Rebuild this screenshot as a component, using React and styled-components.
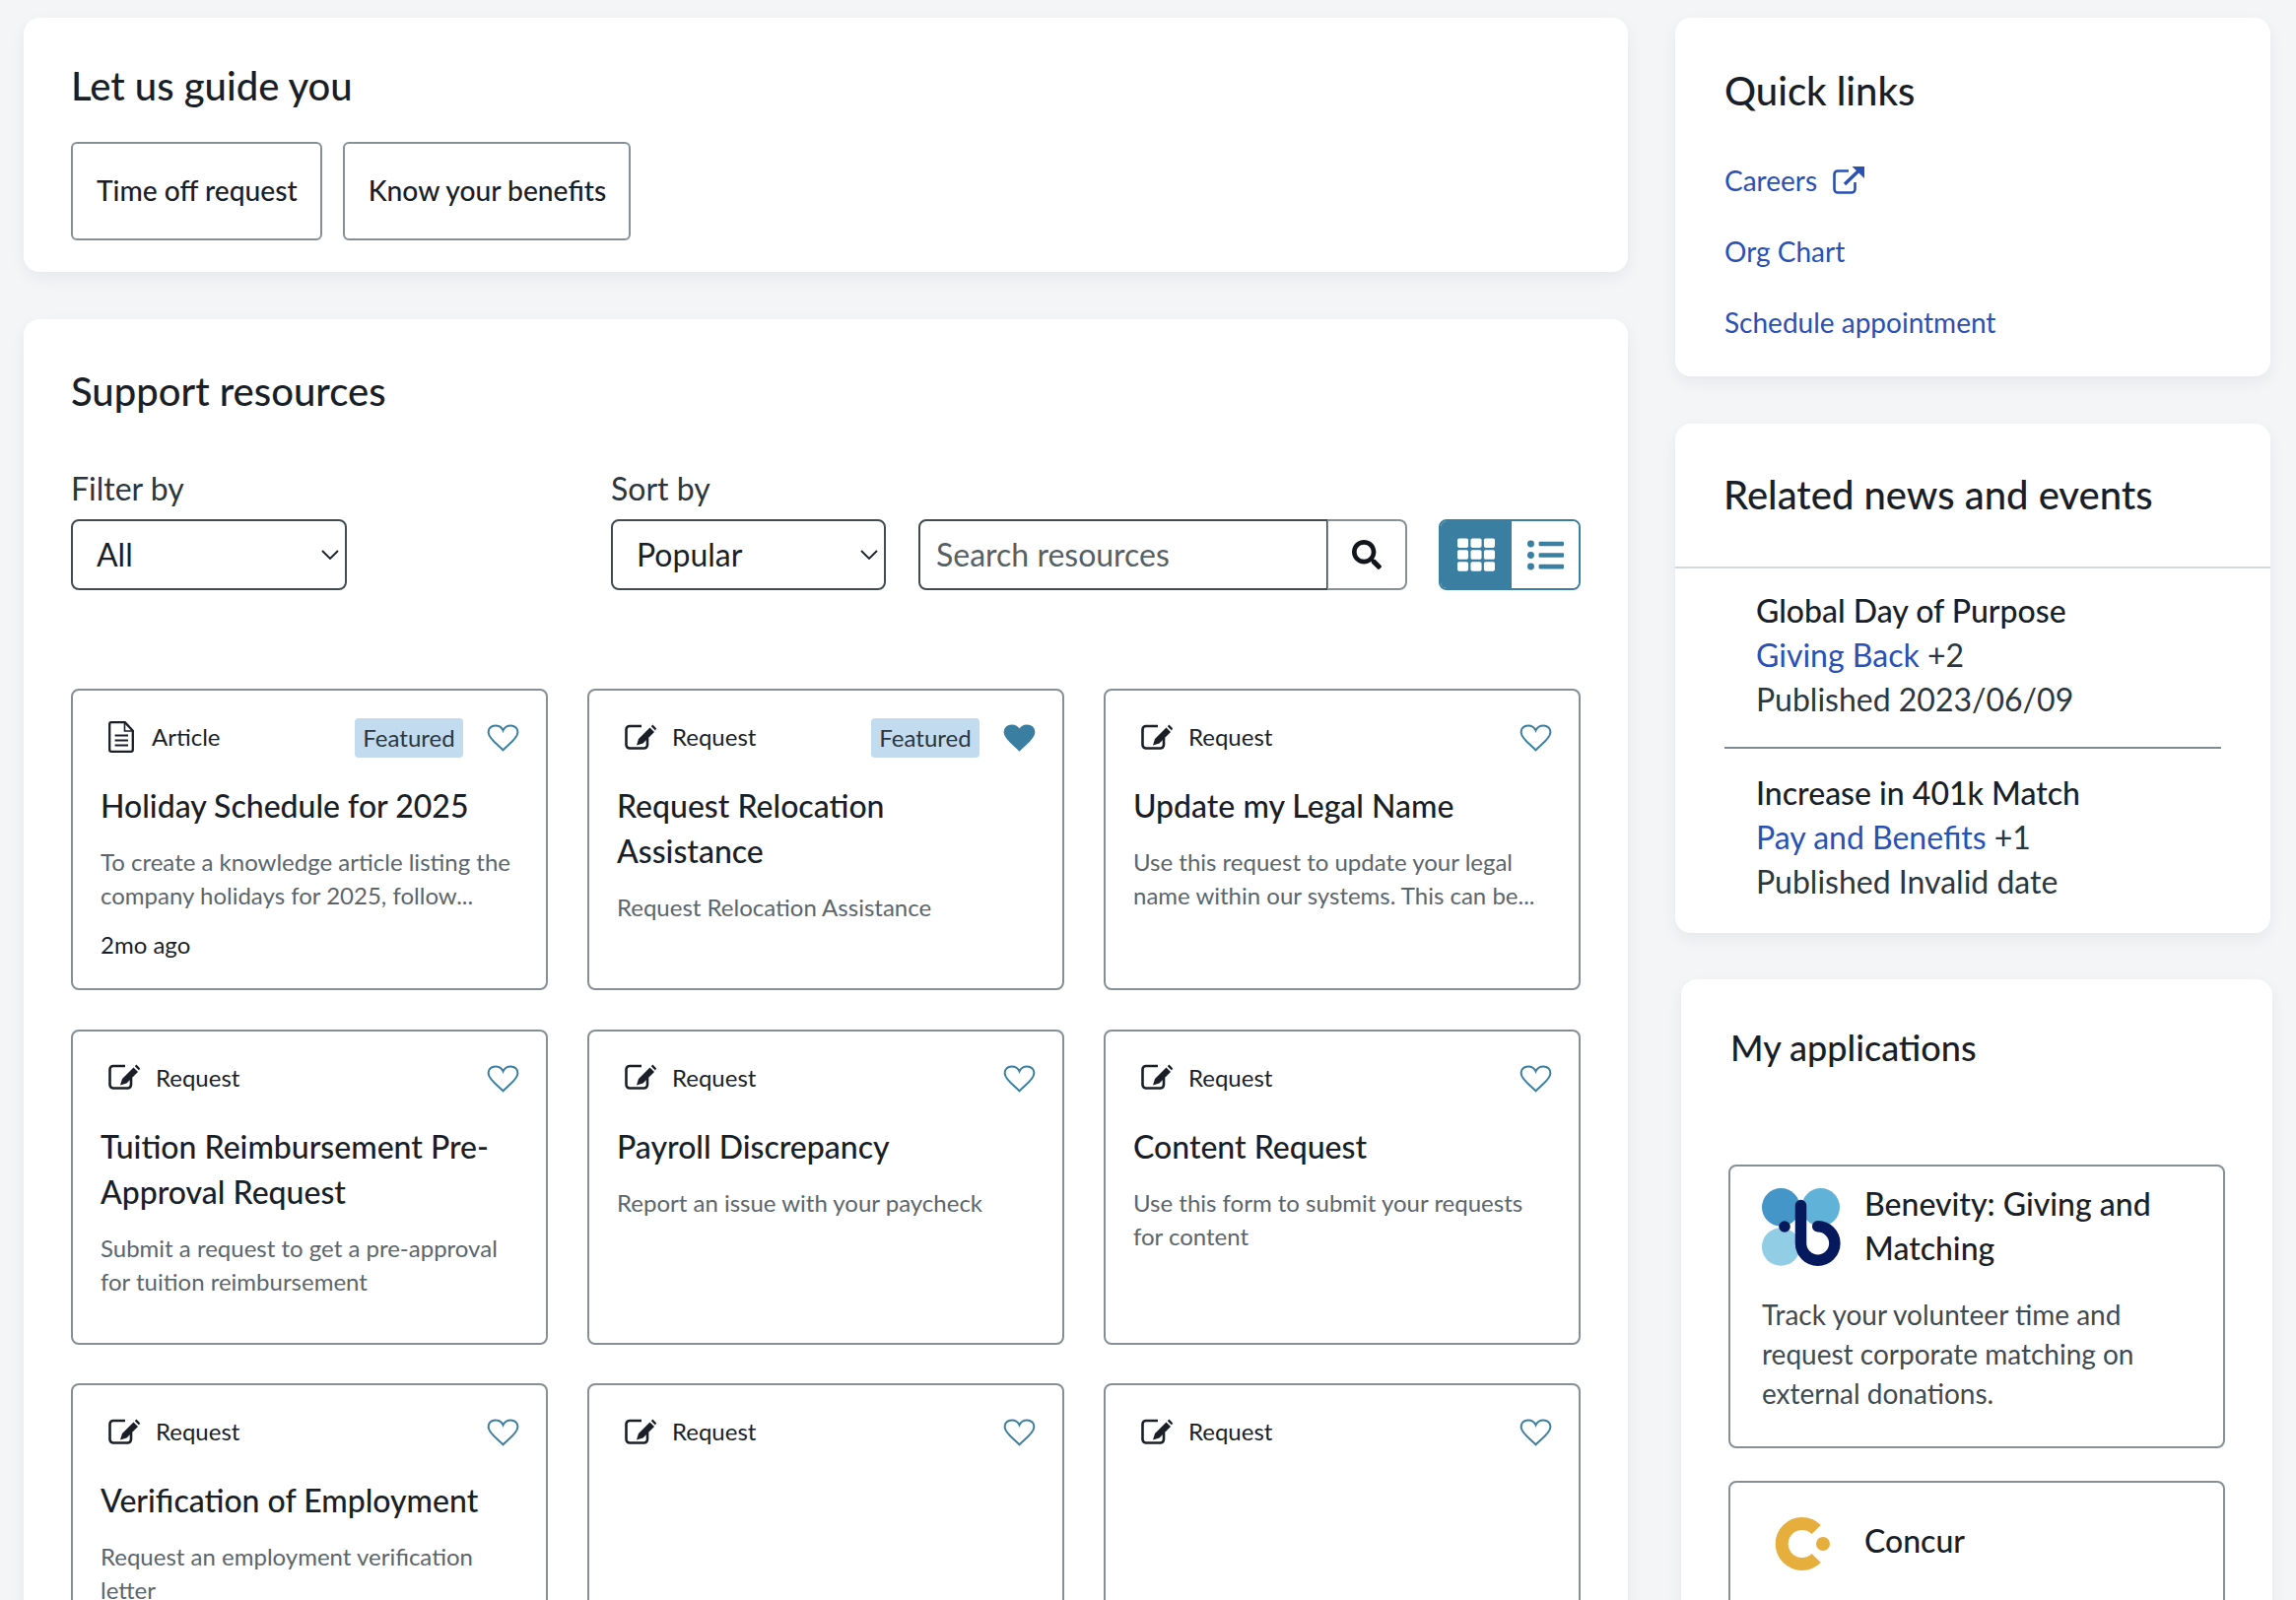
import React from "react";
import styled, { createGlobalStyle } from "styled-components";
import { FaSearch, FaTh, FaListUl } from "react-icons/fa";

const GlobalStyle = createGlobalStyle`
  html, body {
    margin: 0;
    height: 100%;
    overflow: hidden;
    background: #f4f5f7;
    font-family: Lato, "Liberation Sans", sans-serif;
    color: #1a1f27;
  }
  * { box-sizing: border-box; }
`;

const resources = [
  { type: "Article", title: "Holiday Schedule for 2025", desc: "To create a knowledge article listing the company holidays for 2025, follow...", meta: "2mo ago", featured: true },
  { type: "Request", title: "Request Relocation Assistance", desc: "Request Relocation Assistance", featured: true, liked: true },
  { type: "Request", title: "Update my Legal Name", desc: "Use this request to update your legal name within our systems. This can be..." },
  { type: "Request", title: "Tuition Reimbursement Pre-Approval Request", desc: "Submit a request to get a pre-approval for tuition reimbursement" },
  { type: "Request", title: "Payroll Discrepancy", desc: "Report an issue with your paycheck" },
  { type: "Request", title: "Content Request", desc: "Use this form to submit your requests for content" },
  { type: "Request", title: "Verification of Employment", desc: "Request an employment verification letter" },
  { type: "Request" },
  { type: "Request" },
];

const news = [
  { title: "Global Day of Purpose", tag: "Giving Back", more: "+2", date: "Published 2023/06/09" },
  { title: "Increase in 401k Match", tag: "Pay and Benefits", more: "+1", date: "Published Invalid date" },
];

function Heart({ filled }) {
  return (
    <HeartSvg viewBox="0 0 33 28" $filled={filled}>
      <path d="M16.5 26.3 C12.5 21.8 1.6 14.8 1.6 8.2 C1.6 4.2 4.8 1.4 8.6 1.4 C12 1.4 15.2 3.2 16.5 6.4 C17.8 3.2 21 1.4 24.4 1.4 C28.2 1.4 31.4 4.2 31.4 8.2 C31.4 14.8 20.5 21.8 16.5 26.3 Z" />
    </HeartSvg>
  );
}

function ExternalIcon() {
  return (
    <LinkIcon viewBox="0 0 32 28" fill="none" stroke="currentColor">
      <path d="M16 4.5 H5 a3.5 3.5 0 0 0 -3.5 3.5 V23 a3.5 3.5 0 0 0 3.5 3.5 H19 a3.5 3.5 0 0 0 3.5 -3.5 V16" strokeWidth="2.6" />
      <path d="M12 18 L26 4.5" strokeWidth="3.4" />
      <path d="M19.5 0 H32 V12 Z" fill="currentColor" stroke="none" />
    </LinkIcon>
  );
}

function DocIcon() {
  return (
    <TypeSvg viewBox="0 0 26 32" width="26" height="32" fill="none" stroke="currentColor" $gap={18}>
      <path d="M3 1.2 H16.8 L24.8 9.8 V29 a1.8 1.8 0 0 1 -1.8 1.8 H3 a1.8 1.8 0 0 1 -1.8 -1.8 V3 a1.8 1.8 0 0 1 1.8 -1.8 Z" strokeWidth="2.3" />
      <path d="M16.5 1.5 V10 H24.6" strokeWidth="1.6" />
      <path d="M6.6 14.4 H20 M6.6 19.4 H20 M6.6 24.4 H20" strokeWidth="2" />
    </TypeSvg>
  );
}

function EditIcon() {
  return (
    <TypeSvg viewBox="0 0 32 26" width="32" height="26" fill="none" stroke="currentColor" $gap={16}>
      <path d="M17 2 H5 a3.5 3.5 0 0 0 -3.5 3.5 V21 a3.5 3.5 0 0 0 3.5 3.5 H19.5 a3.5 3.5 0 0 0 3.5 -3.5 V14" strokeWidth="2.6" />
      <path d="M12 21.5 L14 15 L25.5 3.5 L30 8 L18.5 19.5 Z" fill="currentColor" stroke="none" />
      <path d="M26.8 2.2 L28.4 0.6 L32 4.2 L31 6.6 Z" fill="currentColor" stroke="none" />
    </TypeSvg>
  );
}

function Chevron() {
  return (
    <SelectArrow viewBox="0 0 18 10" fill="none" stroke="#1a1f27">
      <path d="M1 1 L9 9 L17 1" strokeWidth="1.8" />
    </SelectArrow>
  );
}

function BenevityLogo() {
  return (
    <Logo viewBox="0 0 80 80">
      <circle cx="19.3" cy="19.3" r="19.3" fill="#4496c8" />
      <circle cx="59.7" cy="19.3" r="19.3" fill="#61b2d8" />
      <circle cx="19.3" cy="59.5" r="19.3" fill="#92cde6" />
      <path d="M39.5 17.5 V56 A17.2 17.2 0 1 0 56.7 38.8" fill="none" stroke="#06195c" strokeWidth="11.5" strokeLinecap="round" />
      <circle cx="23" cy="39" r="5.8" fill="#06195c" />
    </Logo>
  );
}

function ConcurLogo() {
  return (
    <Logo viewBox="0 0 80 80">
      <path d="M55.2 25.5 A20.5 20.5 0 1 0 55.2 54.5" fill="none" stroke="#e6ae3c" strokeWidth="13" />
      <circle cx="62" cy="40" r="7" fill="#e6ae3c" />
    </Logo>
  );
}

function ResourceCard({ type, title, desc, meta, featured, liked }) {
  return (
    <Card>
      <CardHead>
        <CardType>
          {type === "Article" ? <DocIcon /> : <EditIcon />}
          {type}
        </CardType>
        {featured && <Tag>Featured</Tag>}
        <Heart filled={liked} />
      </CardHead>
      {title && <CardTitle>{title}</CardTitle>}
      {desc && <CardDesc>{desc}</CardDesc>}
      <CardMeta>{meta}</CardMeta>
    </Card>
  );
}

export default function App() {
  return (
    <>
      <GlobalStyle />
      <Page>
        <Main>
          <Panel $pad="44px 49px 32px 48px">
            <Heading>Let us guide you</Heading>
            <GuideRow>
              <GuideButton>Time off request</GuideButton>
              <GuideButton>Know your benefits</GuideButton>
            </GuideRow>
          </Panel>
          <Panel $pad="48px 48px 0 48px">
            <Heading>Support resources</Heading>
            <Filters>
              <FilterGroup>
                <Label htmlFor="filter">Filter by</Label>
                <SelectWrap>
                  <Select id="filter" defaultValue="All">
                    <option>All</option>
                  </Select>
                  <Chevron />
                </SelectWrap>
              </FilterGroup>
              <FilterGroup>
                <Label htmlFor="sort">Sort by</Label>
                <SelectWrap>
                  <Select id="sort" defaultValue="Popular">
                    <option>Popular</option>
                  </Select>
                  <Chevron />
                </SelectWrap>
              </FilterGroup>
              <SearchBox>
                <SearchInput placeholder="Search resources" />
                <SearchButton><FaSearch /></SearchButton>
              </SearchBox>
              <ViewToggle>
                <ToggleButton $active><FaTh /></ToggleButton>
                <ToggleButton><FaListUl /></ToggleButton>
              </ViewToggle>
            </Filters>
            <CardGrid>
              {resources.map((item, index) => (
                <ResourceCard key={index} {...item} />
              ))}
            </CardGrid>
          </Panel>
        </Main>
        <Side>
          <Panel $pad="49px 50px 38px">
            <SideHeading>Quick links</SideHeading>
            <QuickList>
              <QuickLink href="#">Careers <ExternalIcon /></QuickLink>
              <QuickLink href="#">Org Chart</QuickLink>
              <QuickLink href="#">Schedule appointment</QuickLink>
            </QuickList>
          </Panel>
          <Panel $pad="0 0 6px">
            <NewsHead>
              <SideHeading>Related news and events</SideHeading>
            </NewsHead>
            {news.map((item, index) => (
              <NewsItem key={item.title} $last={index === news.length - 1}>
                <NewsTitle>{item.title}</NewsTitle>
                <NewsLine><NewsTag href="#">{item.tag}</NewsTag> {item.more}</NewsLine>
                <NewsDate>{item.date}</NewsDate>
              </NewsItem>
            ))}
          </Panel>
          <AppsPanel>
            <AppsHeading>My applications</AppsHeading>
            <AppCard>
              <AppHead>
                <BenevityLogo />
                <AppTitle>Benevity: Giving and Matching</AppTitle>
              </AppHead>
              <AppDesc>Track your volunteer time and request corporate matching on external donations.</AppDesc>
            </AppCard>
            <AppCard>
              <AppHead>
                <ConcurLogo />
                <AppTitle $center>Concur</AppTitle>
              </AppHead>
            </AppCard>
          </AppsPanel>
        </Side>
      </Page>
    </>
  );
}

const Page = styled.div`
  display: grid;
  grid-template-columns: 1628px 604px;
  column-gap: 48px;
  align-items: start;
  height: 1624px;
  overflow: hidden;
  padding: 18px 0 0 24px;
`;

const Main = styled.main`
  display: flex;
  flex-direction: column;
  gap: 48px;
`;

const Side = styled.aside`
  display: flex;
  flex-direction: column;
  gap: 48px;
`;

const Panel = styled.section`
  background: #fff;
  border-radius: 16px;
  box-shadow: 0 6px 16px rgba(30, 40, 50, 0.06);
  padding: ${(p) => p.$pad};
`;

const Heading = styled.h2`
  margin: 0;
  font-size: 40px;
  line-height: 50px;
  font-weight: 500;
  color: #1a1f27;
`;

const GuideRow = styled.div`
  display: flex;
  gap: 21px;
  margin-top: 32px;
`;

const GuideButton = styled.button`
  height: 100px;
  padding: 0 23px 3px 24px;
  background: #fff;
  border: 2px solid #858f96;
  border-radius: 6px;
  font: 500 28.2px Lato, sans-serif;
  color: #1a1f27;
`;

const Filters = styled.div`
  display: flex;
  align-items: flex-end;
  margin-top: 57px;
`;

const FilterGroup = styled.div`
  display: flex;
  flex-direction: column;
  gap: 14px;
  width: 280px;
  margin-right: 268px;

  & + & {
    width: 279px;
    margin-right: 33px;
  }
`;

const Label = styled.label`
  font-size: 32px;
  line-height: 34px;
  color: #2c363d;
`;

const SelectWrap = styled.div`
  position: relative;
  display: flex;
`;

const Select = styled.select`
  appearance: none;
  width: 100%;
  height: 72px;
  padding: 0 24px 2px;
  background: #fff;
  border: 2px solid #414b52;
  border-radius: 8px;
  font: 32px Lato, sans-serif;
  color: #1a1f27;
`;

const SelectArrow = styled.svg`
  position: absolute;
  right: 8px;
  top: 31px;
  width: 18px;
  height: 10px;
  pointer-events: none;
`;

const SearchBox = styled.div`
  display: flex;
  height: 72px;
  width: 496px;
  margin-right: 32px;
`;

const SearchInput = styled.input`
  flex: 1;
  min-width: 0;
  padding: 0 16px 2px;
  border: 2px solid #414b52;
  border-right-width: 1px;
  border-radius: 8px 0 0 8px;
  font: 32px Lato, sans-serif;
  outline: none;

  &::placeholder {
    color: #555f66;
    opacity: 1;
  }
`;

const SearchButton = styled.button`
  width: 81px;
  display: flex;
  align-items: center;
  justify-content: center;
  background: #fff;
  border: 2px solid #858f96;
  border-left-width: 1px;
  border-radius: 0 8px 8px 0;
  font-size: 30px;
  color: #12161c;
`;

const ViewToggle = styled.div`
  display: flex;
  width: 144px;
  height: 72px;
  border: 2px solid #3a7ea1;
  border-radius: 8px;
  overflow: hidden;
`;

const ToggleButton = styled.button`
  flex: ${(p) => (p.$active ? "0 0 72px" : "1")};
  display: flex;
  align-items: center;
  justify-content: center;
  padding: 0;
  border: 0;
  font-size: ${(p) => (p.$active ? "38px" : "37px")};
  background: ${(p) => (p.$active ? "#3a7ea1" : "#fff")};
  color: ${(p) => (p.$active ? "#fff" : "#3a7ea1")};
`;

const CardGrid = styled.div`
  display: grid;
  grid-template-columns: repeat(3, 484px);
  column-gap: 40px;
  row-gap: 39.5px;
  margin-top: 100px;
`;

const Card = styled.article`
  display: flex;
  flex-direction: column;
  padding: 28px 27px 27px 28px;
  border: 2px solid #858f96;
  border-radius: 8px;
  background: #fff;
`;

const CardHead = styled.div`
  display: flex;
  align-items: center;
  height: 40px;
  gap: 24px;
`;

const CardType = styled.span`
  display: flex;
  align-items: center;
  flex: 1;
  padding: 0 0 3px 8px;
  font-size: 24px;
  color: #1a1f27;
`;

const TypeSvg = styled.svg`
  flex: none;
  margin-right: ${(p) => p.$gap}px;
`;

const Tag = styled.span`
  width: 110px;
  height: 40px;
  display: flex;
  align-items: center;
  justify-content: center;
  padding-bottom: 2px;
  background: #c2dbef;
  border-radius: 4px;
  font-size: 24px;
  color: #2c363d;
`;

const HeartSvg = styled.svg`
  width: 33px;
  height: 28px;

  path {
    fill: ${(p) => (p.$filled ? "#3a7ea1" : "none")};
    stroke: #3a7ea1;
    stroke-width: 2;
  }
`;

const CardTitle = styled.h3`
  margin: 26px 0 0;
  font-size: 32px;
  line-height: 46px;
  font-weight: 500;
  color: #1a1f27;
`;

const CardDesc = styled.p`
  margin: 17px 0 0;
  font-size: 24px;
  line-height: 34px;
  color: #5b666c;
`;

const CardMeta = styled.div`
  margin-top: 16px;
  min-height: 2px;
  font-size: 24px;
  line-height: 34px;
  color: #1a1f27;
`;

const SideHeading = styled.h2`
  margin: 0;
  font-size: 40px;
  line-height: 50px;
  font-weight: 500;
  color: #1a1f27;
`;

const QuickList = styled.div`
  display: flex;
  flex-direction: column;
  gap: 38px;
  margin-top: 49px;
`;

const QuickLink = styled.a`
  display: flex;
  align-items: center;
  gap: 16px;
  height: 34px;
  font-size: 28px;
  text-decoration: none;
  color: #2a50b4;
`;

const LinkIcon = styled.svg`
  width: 32px;
  height: 28px;
`;

const NewsHead = styled.div`
  padding: 47px 49px 48px;
  border-bottom: 2px solid #d3d8dc;
`;

const NewsItem = styled.div`
  display: flex;
  flex-direction: column;
  margin: 0 50px;
  padding: ${(p) => (p.$last ? "22px 32px 24px" : "20px 32px 26px")};
  border-bottom: ${(p) => (p.$last ? "0" : "2px solid #7f8b90")};
`;

const NewsTitle = styled.div`
  font-size: 32px;
  line-height: 45px;
  font-weight: 500;
  color: #1a1f27;
`;

const NewsLine = styled.div`
  font-size: 32px;
  line-height: 45px;
  color: #2c363d;
`;

const NewsTag = styled.a`
  text-decoration: none;
  color: #2a50b4;
`;

const NewsDate = styled.div`
  font-size: 32px;
  line-height: 45px;
  color: #2c363d;
`;

const AppsPanel = styled(Panel)`
  margin: -1px -2px 0 6px;
  padding: 44px 48px 0;
  height: 700px;
`;

const AppsHeading = styled.h2`
  margin: 0 0 0 2px;
  font-size: 36px;
  line-height: 50px;
  font-weight: 500;
  color: #1a1f27;
`;

const AppCard = styled.article`
  margin-top: 33px;
  padding: 22px 32px 33px;
  border: 2px solid #858f96;
  border-radius: 8px;
  background: #fff;

  h2 + & {
    margin-top: 94px;
  }
`;

const AppHead = styled.div`
  display: flex;
  gap: 24px;
`;

const Logo = styled.svg`
  width: 80px;
  height: 80px;
  flex: none;
`;

const AppTitle = styled.h3`
  margin: -7px 0 0;
  align-self: ${(p) => (p.$center ? "center" : "auto")};
  font-size: 32px;
  line-height: 45px;
  font-weight: 500;
  color: #1a1f27;
`;

const AppDesc = styled.p`
  margin: 25px 0 0;
  font-size: 28px;
  line-height: 40.2px;
  color: #3f4a51;
`;
